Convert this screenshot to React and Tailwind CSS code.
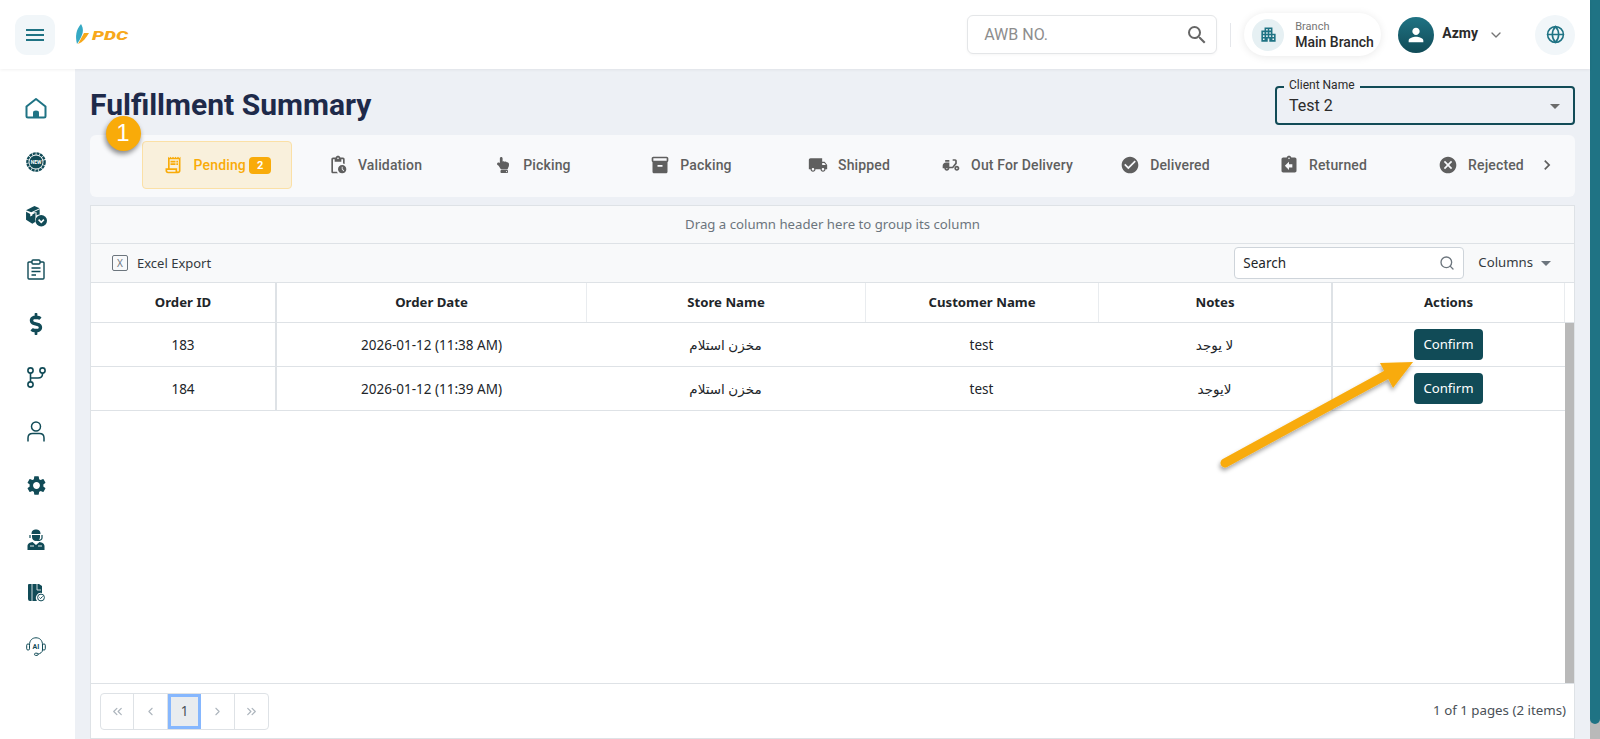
import {
  MdOutlineReceiptLong,
  MdOutlinePendingActions,
  MdInventory2,
  MdLocalShipping,
  MdDeliveryDining,
  MdCheckCircle,
  MdAssignmentReturn,
  MdCancel,
  MdSettings,
  MdChevronRight,
  MdPerson,
  MdApartment,
  MdMenu,
  MdOutlineSearch,
  MdArrowDropDown,
} from "react-icons/md";
import { FaDollarSign, FaHandPointUp } from "react-icons/fa";
import { LuGlobe, LuSearch, LuChevronDown, LuChevronsLeft, LuChevronLeft, LuChevronRight, LuChevronsRight } from "react-icons/lu";

const pestanas = [
  { nombre: "Validation", Icono: MdOutlinePendingActions },
  { nombre: "Picking", Icono: FaHandPointUp },
  { nombre: "Packing", Icono: MdInventory2 },
  { nombre: "Shipped", Icono: MdLocalShipping },
  { nombre: "Out For Delivery", Icono: MdDeliveryDining },
  { nombre: "Delivered", Icono: MdCheckCircle },
  { nombre: "Returned", Icono: MdAssignmentReturn },
  { nombre: "Rejected", Icono: MdCancel },
];

const filas = [
  { id: "183", fecha: "2026-01-12 (11:38 AM)", tienda: "مخزن استلام", cliente: "test", notas: "لا يوجد" },
  { id: "184", fecha: "2026-01-12 (11:39 AM)", tienda: "مخزن استلام", cliente: "test", notas: "لايوجد" },
];

const columnas = "grid grid-cols-[184px_311px_279px_233px_233px_233px_1fr]";

function Logo() {
  return (
    <svg width="56" height="22" viewBox="0 0 56 22" className="ml-[20px]">
      <path d="M6 0 C9 5 9 10 2 20 C0 12 1 6 6 0Z" fill="#35a9c4" />
      <path d="M14 9 L9 9 L3 20 C8 18 11 14 14 9Z" fill="#f7a81b" />
      <text x="17" y="16" fontFamily="Roboto, sans-serif" fontWeight="900" fontStyle="italic" fontSize="12" textLength="36" lengthAdjust="spacingAndGlyphs" fill="#f7a81b">
        PDC
      </text>
    </svg>
  );
}

function IconoCasa() {
  return (
    <svg width="22" height="22" viewBox="0 0 22 22" fill="none" stroke="#1f7384" strokeWidth="2" strokeLinejoin="round">
      <path d="M1.5 19 V9.5 L11 2 L20.5 9.5 V19 Q20.5 20.5 19 20.5 H3 Q1.5 20.5 1.5 19Z" />
      <path d="M8 20.5 V15.5 Q8 13.5 11 13.5 Q14 13.5 14 15.5 V20.5Z" fill="#1f7384" stroke="none" />
    </svg>
  );
}

function IconoNuevo() {
  return (
    <svg width="20" height="20" viewBox="0 0 20 20">
      <circle cx="10" cy="10" r="8.6" fill="none" stroke="#114b57" strokeWidth="2.4" strokeDasharray="3 0.7" />
      <circle cx="10" cy="10" r="6.6" fill="#114b57" />
      <text x="10" y="11.8" textAnchor="middle" fontFamily="Roboto, sans-serif" fontWeight="700" fontSize="5" fill="#ffffff">
        NEW
      </text>
    </svg>
  );
}

function IconoCajas() {
  return (
    <svg width="22" height="22" viewBox="0 0 21 21" fill="#114b57">
      <path d="M1 5 L9 1 L14 3 L6 7Z" />
      <path d="M1 6.5 L5 8.5 V11 L7 10 V9 L10 7.5 V12 A6 6 0 0 0 10 16 L7 18 L1 14Z" />
      <path d="M8 7 L14 4 V9 A6 6 0 0 0 11 10 V7Z" />
      <circle cx="15.5" cy="15" r="5.5" />
      <path d="M13 14 L15.5 16.5 L18 14" fill="none" stroke="#ffffff" strokeWidth="1.5" />
    </svg>
  );
}

function IconoPortapapeles() {
  return (
    <svg width="18" height="21" viewBox="0 0 18 21" fill="none" stroke="#114b57" strokeWidth="1.4">
      <path d="M5 3 H2 Q1 3 1 4 V19 Q1 20 2 20 H16 Q17 20 17 19 V4 Q17 3 16 3 H13" />
      <rect x="5" y="1" width="8" height="4" rx="1" />
      <path d="M4.5 9 H13.5 M4.5 12.5 H13.5 M4.5 16 H9" strokeWidth="1.6" />
    </svg>
  );
}

function IconoRamas() {
  return (
    <svg width="19" height="21" viewBox="0 0 19 21" fill="none" stroke="#114b57" strokeWidth="1.6">
      <circle cx="3.5" cy="3.5" r="2.6" />
      <circle cx="15.5" cy="3.5" r="2.6" />
      <circle cx="3.5" cy="17.5" r="2.6" />
      <path d="M3.5 6 V15 M15.5 6 V7 Q15.5 11 11 11 H3.5" />
    </svg>
  );
}

function IconoUsuario() {
  return (
    <svg width="18" height="21" viewBox="0 0 18 21" fill="none" stroke="#114b57" strokeWidth="1.5">
      <circle cx="9" cy="5.5" r="4.5" />
      <path d="M1 20.5 V17 Q1 12.5 5.5 12.5 H12.5 Q17 12.5 17 17 V20.5" />
    </svg>
  );
}

function IconoAgente() {
  return (
    <svg width="18" height="21" viewBox="0 0 18 21" fill="#114b57">
      <path d="M4.5 5 C4.5 1.5 6.5 0.5 9 0.5 C11.5 0.5 13.5 1.5 13.5 5Z" />
      <path d="M5 6 H13 V8 C13 10.5 11 12 9 12 C7 12 5 10.5 5 8Z" />
      <path d="M3 6 V9 M15 6 V9 C15 11 13 11.5 10 11.5" fill="none" stroke="#114b57" strokeWidth="1.2" />
      <path d="M0.5 21 V17 C0.5 14.5 3 13.5 5.5 13 L9 16 L12.5 13 C15 13.5 17.5 14.5 17.5 17 V21Z" />
      <path d="M3 17 H7 M11 17 H15" stroke="#ffffff" strokeWidth="0.9" />
    </svg>
  );
}

function IconoPaquete() {
  return (
    <svg width="18" height="20" viewBox="0 0 18 20" fill="#114b57">
      <path d="M2 1 H12 L15 3 V10 A5 5 0 0 0 10 18 H3 Q1 18 1 16 V2 Q1 1 2 1Z" />
      <path d="M5 1 V18 M10 1 V7 H14" stroke="#ffffff" strokeWidth="0.8" fill="none" />
      <circle cx="14" cy="14.5" r="3.4" fill="none" stroke="#114b57" strokeWidth="1" />
      <path d="M12.5 14.5 L13.6 15.6 L15.6 13.4" fill="none" stroke="#114b57" strokeWidth="1" />
    </svg>
  );
}

function IconoAi() {
  return (
    <svg width="20" height="20" viewBox="0 0 20 20" fill="none" stroke="#114b57" strokeWidth="1">
      <path d="M3.5 8 C3.5 3 6.5 0.8 10 0.8 C13.5 0.8 16.5 3 16.5 8 V13 C16.5 15.5 14 16.5 12 17.2" />
      <rect x="0.7" y="7" width="2.8" height="6" rx="1.2" />
      <rect x="16.5" y="7" width="2.8" height="6" rx="1.2" />
      <rect x="8.5" y="16.2" width="3.6" height="2.2" rx="1.1" />
      <text x="10" y="12.2" textAnchor="middle" fontFamily="Roboto, sans-serif" fontWeight="700" fontSize="7" fill="#114b57" stroke="none">
        AI
      </text>
    </svg>
  );
}

function BarraLateral() {
  const items = [
    <IconoCasa key="home" />,
    <IconoNuevo key="new" />,
    <IconoCajas key="cajas" />,
    <IconoPortapapeles key="pedidos" />,
    <FaDollarSign key="dinero" className="text-[22px] text-[#114b57]" />,
    <IconoRamas key="rama" />,
    <IconoUsuario key="usuario" />,
    <MdSettings key="ajustes" className="text-[23px] text-[#114b57]" />,
    <IconoAgente key="agente" />,
    <IconoPaquete key="paquete" />,
    <IconoAi key="ai" />,
  ];

  return (
    <aside className="w-[75px] shrink-0 bg-white pt-[12px]">
      {items.map((icono, index) => (
        <div key={index} className="flex h-[53.9px] items-center justify-center pr-[3px]">
          {icono}
        </div>
      ))}
    </aside>
  );
}

function Cabecera() {
  return (
    <header className="relative z-10 flex h-[69px] shrink-0 items-center bg-white pl-[15px] pr-[15px] shadow-[0_1px_3px_rgba(0,0,0,0.06)]">
      <button className="flex h-10 w-10 items-center justify-center rounded-xl bg-[#f1f6f9]">
        <MdMenu className="text-[24px] text-[#1f7384]" />
      </button>
      <Logo />

      <div className="ml-auto flex h-[39px] w-[250px] items-center justify-between rounded-md border border-[#e4e6e8] bg-white pl-4 pr-[7px] shadow-[0_1px_3px_rgba(0,0,0,0.04)]">
        <span className="text-[16px] text-[#8d8d8d]">AWB NO.</span>
        <MdOutlineSearch className="text-[24px] text-[#666666]" />
      </div>
      <div className="ml-[13px] h-6 w-px bg-[#e5e7eb]" />
      <div className="ml-[13px] flex h-[43px] w-[137px] items-center rounded-full bg-white pl-2 shadow-[0_1px_8px_rgba(0,0,0,0.09)]">
        <span className="flex h-8 w-8 items-center justify-center rounded-full bg-[#e6f0f3]">
          <MdApartment className="text-[19px] text-[#1f7384]" />
        </span>
        <div className="ml-[11px] leading-none">
          <p className="text-[11px] text-[#757575]">Branch</p>
          <p className="mt-[3px] text-[14px] font-medium text-[#2b2b2b]">Main Branch</p>
        </div>
      </div>
      <span className="ml-[17px] flex h-9 w-9 items-center justify-center rounded-full bg-gradient-to-b from-[#1f7384] to-[#114b57]">
        <MdPerson className="text-[22px] text-white" />
      </span>
      <span className="ml-2 -mt-[3px] text-[14px] font-bold text-[#2b2b2b]">Azmy</span>
      <LuChevronDown className="ml-[10px] text-[16px] text-[#757575]" />
      <span className="ml-[31px] flex h-10 w-10 items-center justify-center rounded-full bg-[#f1f6f9]">
        <LuGlobe className="text-[19px] text-[#1f7384]" />
      </span>
    </header>
  );
}

function Pestanas() {
  return (
    <div className="flex h-[62px] items-start rounded-md bg-[#f8f9fb] pl-[52px] pt-[6px]">
      <div className="flex gap-2">
        <div className="flex h-[48px] w-[150px] items-center justify-center rounded-[4px] border border-[#fbe0a6] bg-[#f9f0dc] text-[14px] font-medium tracking-[0.01em] text-[#f9ab09]">
          <MdOutlineReceiptLong className="mr-[11px] text-[20px]" />
          Pending
          <span className="ml-[3px] rounded-[4px] bg-[#f9ab09] px-[8px] py-px text-[11px] font-bold leading-[15px] text-white">2</span>
        </div>
        {pestanas.map(({ nombre, Icono }) => (
          <div key={nombre} className="flex h-[48px] w-[150px] items-center justify-center text-[14px] font-medium tracking-[0.01em] text-[#5f5f5f]">
            <Icono className={nombre === "Picking" ? "mr-[12px] text-[16px]" : "mr-[10px] text-[20px]"} />
            {nombre}
          </div>
        ))}
      </div>
      <MdChevronRight className="ml-[-19px] mt-[14px] text-[20px] text-[#5f5f5f]" />
    </div>
  );
}

function Tabla() {
  const claseCabecera = "flex items-center justify-center text-[13.2px] font-bold text-[#212529]";
  const claseCelda = "flex items-center justify-center pt-px text-[13.5px] text-[#212529]";
  const claseAccion = "flex items-center justify-center border-l-[2px] border-[#dee2e6]";

  return (
    <section className="mt-2 flex h-[534px] flex-col border border-[#dee2e6] bg-white font-['Noto_Sans','DejaVu_Sans',sans-serif]">
      <div className="flex h-[38px] shrink-0 items-center justify-center border-b border-[#dee2e6] bg-[#f8f9fa] text-[13.2px] text-[#6c757d]">
        Drag a column header here to group its column
      </div>
      <div className="flex h-[39px] shrink-0 items-center border-b border-[#dee2e6] bg-[#f8f9fa] pl-[21px]">
        <span className="flex h-4 w-4 items-center justify-center rounded-[2px] border border-[#6c757d] text-[10px] text-[#6c757d]">X</span>
        <span className="ml-[9px] pt-[2px] text-[13px] text-[#343a40]">Excel Export</span>
        <div className="ml-auto flex h-8 w-[230px] items-center justify-between rounded-[4px] border border-[#ced4da] bg-white pl-2 pr-2">
          <span className="pt-px text-[13.5px] text-[#212529]">Search</span>
          <LuSearch className="text-[16px] text-[#6c757d]" />
        </div>
        <span className="ml-[14px] text-[13.2px] text-[#343a40]">Columns</span>
        <MdArrowDropDown className="ml-[1px] mr-[16px] text-[24px] text-[#6c757d]" />
      </div>

      <div className={`${columnas} h-[40px] shrink-0 border-b border-[#dee2e6]`}>
        <div className={claseCabecera}>Order ID</div>
        <div className={`${claseCabecera} border-l-[2px] border-[#dee2e6]`}>Order Date</div>
        <div className={`${claseCabecera} border-l border-[#e9ecef]`}>Store Name</div>
        <div className={`${claseCabecera} border-l border-[#e9ecef]`}>Customer Name</div>
        <div className={`${claseCabecera} border-l border-[#e9ecef]`}>Notes</div>
        <div className={`${claseCabecera} border-l-[2px] border-[#dee2e6]`}>Actions</div>
        <div className="border-l border-[#e9ecef]" />
      </div>

      <div className="flex min-h-0 flex-1">
        <div className="min-w-0 flex-1">
          {filas.map((fila) => (
            <div key={fila.id} className={`${columnas} h-[44px] border-b border-[#dee2e6]`}>
              <div className={claseCelda}>{fila.id}</div>
              <div className={`${claseCelda} border-l-[2px] border-[#dee2e6]`}>{fila.fecha}</div>
              <div className={claseCelda} dir="rtl">{fila.tienda}</div>
              <div className={claseCelda}>{fila.cliente}</div>
              <div className={claseCelda} dir="rtl">{fila.notas}</div>
              <div className={claseAccion}>
                <button className="h-[31px] w-[69px] rounded-[4px] bg-[#114b57] pt-px text-[13.2px] text-white">Confirm</button>
              </div>
            </div>
          ))}
        </div>
        <div className="w-[9px] shrink-0 bg-[#b9b9b9]" />
      </div>

      <div className="flex h-[55px] shrink-0 items-center justify-between border-t border-[#dee2e6] pl-[9px] pr-[8px]">
        <div className="flex h-[37px] w-[169px] items-stretch rounded-[4px] border border-[#dee2e6] text-[#adb5bd]">
          <span className="flex w-[33px] items-center justify-center border-r border-[#dee2e6]"><LuChevronsLeft className="text-[15px]" /></span>
          <span className="flex w-[34px] items-center justify-center border-r border-[#dee2e6]"><LuChevronLeft className="text-[13px]" /></span>
          <span className="flex w-[33px] items-center justify-center border-[3px] border-[#86b7fe] bg-[#e9ecef] text-[13.5px] text-[#495057]">1</span>
          <span className="flex w-[34px] items-center justify-center border-r border-[#dee2e6]"><LuChevronRight className="text-[13px]" /></span>
          <span className="flex flex-1 items-center justify-center"><LuChevronsRight className="text-[15px]" /></span>
        </div>
        <span className="text-[13.3px] text-[#495057]">1 of 1 pages (2 items)</span>
      </div>
    </section>
  );
}

function Anotaciones() {
  return (
    <>
      <div className="absolute left-[105.5px] top-[115.5px] z-20 flex h-[35px] w-[35px] items-center justify-center rounded-full bg-[#f9ab09] font-['Liberation_Sans',sans-serif] text-[24px] text-white shadow-[-1px_3px_5px_rgba(0,0,0,0.45)]">
        1
      </div>
      <svg className="absolute left-[1200px] top-[340px] z-20" width="240" height="150" viewBox="0 0 240 150">
        <defs>
          <filter id="sombra" x="-20%" y="-20%" width="140%" height="140%">
            <feDropShadow dx="-1" dy="3" stdDeviation="2" floodColor="#000000" floodOpacity="0.35" />
          </filter>
        </defs>
        <g filter="url(#sombra)" fill="#f8ab0b">
          <path d="M25 123 L186 35" stroke="#f8ab0b" strokeWidth="9" strokeLinecap="round" />
          <path d="M213 22 L180 23 L193 48Z" />
        </g>
      </svg>
    </>
  );
}

function App() {
  return (
    <div className="relative flex h-[739px] w-[1600px] overflow-hidden bg-[#edf0f5] font-['Roboto',sans-serif]">
      <div className="flex w-[1590px] flex-col">
        <Cabecera />
        <div className="flex min-h-0 flex-1">
          <BarraLateral />
          <main className="min-w-0 flex-1 px-[15px]">
            <div className="flex h-[66px] items-start justify-between">
              <h1 className="mt-[16px] text-[30px] font-bold leading-[40px] text-[#1e2a4a]">Fulfillment Summary</h1>
              <div className="relative mt-[17px] flex h-[39px] w-[300px] items-center justify-between rounded-[4px] border-2 border-[#114b57] pl-[12px] pr-[6px]">
                <span className="absolute -top-[9px] left-[7px] bg-[#edf0f5] px-[5px] text-[12px] leading-[13px] text-[#2b2b2b]">Client Name</span>
                <span className="text-[16px] text-[#2b2b2b]">Test 2</span>
                <MdArrowDropDown className="text-[24px] text-[#6b6b6b]" />
              </div>
            </div>
            <Pestanas />
            <Tabla />
          </main>
        </div>
      </div>
      <div className="flex w-[10px] shrink-0 flex-col bg-[#b9b9b9]">
        <div className="h-[724px] rounded-b-md bg-[#1f7384]" />
      </div>
      <Anotaciones />
    </div>
  );
}

export default App;
